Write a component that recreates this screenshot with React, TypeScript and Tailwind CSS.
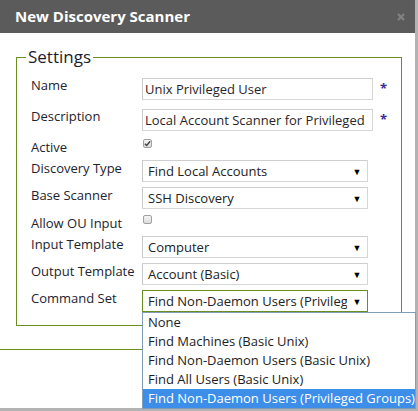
import React from "react";

const labelCls = "w-[111px] shrink-0 text-[13px] leading-[18px] text-[#23232f]";

function TextRow({ label, value }: { label: string; value: string }) {
    return (
        <div className="flex items-start">
            <div className={`${labelCls} -mt-[2px]`}>{label}</div>
            <div className="w-[231px] h-[22px] border border-[#d6d6d6] border-t-[#cfcfcf] border-l-[#c8c8c8] pl-[2px] text-[13px] leading-[20px] text-[#2a1f2a] whitespace-nowrap overflow-hidden">
                {value}
            </div>
            <span className="ml-[7px] mt-[1px] text-[13px] font-bold leading-[18px] text-[#3a2aa0]">*</span>
        </div>
    );
}

function SelectRow({ label, value, focused }: { label: string; value: string; focused?: boolean }) {
    return (
        <div className="flex items-start">
            <div className={`${labelCls} -mt-px`}>{label}</div>
            <div
                className={`w-[226px] h-[22px] flex items-center border text-[13px] leading-[20px] text-[#222] ${
                    focused ? "border-[#6b8e23]" : "border-[#d6d6d6] border-l-[#c8c8c8] border-t-[#cfcfcf]"
                }`}
            >
                <span className="flex-1 pl-[5px] overflow-hidden whitespace-nowrap">{value}</span>
                <span className="w-[20px] text-center text-[9px] leading-none text-black">▼</span>
            </div>
        </div>
    );
}

function CheckRow({ label, checked }: { label: string; checked?: boolean }) {
    return (
        <div className="flex items-start">
            <div className={`${labelCls} mt-[2px]`}>{label}</div>
            <span className="mt-[3px] ml-px w-[9px] h-[9px] rounded-[2px] border border-[#a0a0a0] bg-gradient-to-b from-[#f4f4f4] to-[#dcdcdc] flex items-center justify-center">
                {checked && (
                    <svg viewBox="0 0 8 8" className="w-[7px] h-[7px]">
                        <path d="M1 4.2 L3.1 6.3 L7 1.5" fill="none" stroke="#444" strokeWidth="1.6" />
                    </svg>
                )}
            </span>
        </div>
    );
}

const options = [
    "None",
    "Find Machines (Basic Unix)",
    "Find Non-Daemon Users (Basic Unix)",
    "Find All Users (Basic Unix)",
    "Find Non-Daemon Users (Privileged Groups)",
];

export default function App() {
    return (
        <div
            className="relative w-[418px] h-[411px] overflow-hidden bg-[#b3b3b3]"
            style={{ fontFamily: '"Open Sans", "Liberation Sans", sans-serif' }}
        >
            <div className="w-[415px] h-[408px] bg-white">
                <div className="h-[33px] bg-[#5b5b5b] flex items-center justify-between pl-[15px] pr-[10px]">
                    <span className="text-[15px] font-bold text-white">New Discovery Scanner</span>
                    <svg viewBox="0 0 8 8" className="w-[8px] h-[8px] opacity-80">
                        <path d="M1 1 L7 7 M7 1 L1 7" stroke="#8c8c8c" strokeWidth="2.2" />
                    </svg>
                </div>

                <div className="pt-[14px] pb-[23px] border-b border-[#6b8e23]">
                    <fieldset className="mx-[16px] border border-[#6b8e23] px-[14px] pb-[13px] pt-[11px]">
                        <legend className="ml-[-5px] px-[2px] text-[17px] leading-[20px] text-[#1d1d2b]">Settings</legend>
                        <div className="flex flex-col">
                            <div className="h-[31px]">
                                <TextRow label="Name" value="Unix Privileged User" />
                            </div>
                            <div className="h-[27px]">
                                <TextRow label="Description" value="Local Account Scanner for Privileged" />
                            </div>
                            <div className="h-[24px]">
                                <CheckRow label="Active" checked />
                            </div>
                            <div className="h-[27px]">
                                <SelectRow label="Discovery Type" value="Find Local Accounts" />
                            </div>
                            <div className="h-[25px]">
                                <SelectRow label="Base Scanner" value="SSH Discovery" />
                            </div>
                            <div className="h-[24px]">
                                <CheckRow label="Allow OU Input" />
                            </div>
                            <div className="h-[27px]">
                                <SelectRow label="Input Template" value="Computer" />
                            </div>
                            <div className="h-[27px]">
                                <SelectRow label="Output Template" value="Account (Basic)" />
                            </div>
                            <div className="h-[22px]">
                                <SelectRow label="Command Set" value="Find Non-Daemon Users (Privileged Groups)" focused />
                            </div>
                        </div>
                    </fieldset>
                </div>
            </div>

            <ul className="absolute left-[142px] top-[312px] w-[274px] border border-[#7f9db9] bg-white text-[13px] text-[#1c1c24]">
                {options.map((o, i) => (
                    <li
                        key={o}
                        className={`h-[19px] leading-[19px] pl-[5px] whitespace-nowrap overflow-hidden ${
                            i === options.length - 1 ? "bg-[#3d8ee8] text-white" : ""
                        }`}
                    >
                        {o}
                    </li>
                ))}
            </ul>
        </div>
    );
}
